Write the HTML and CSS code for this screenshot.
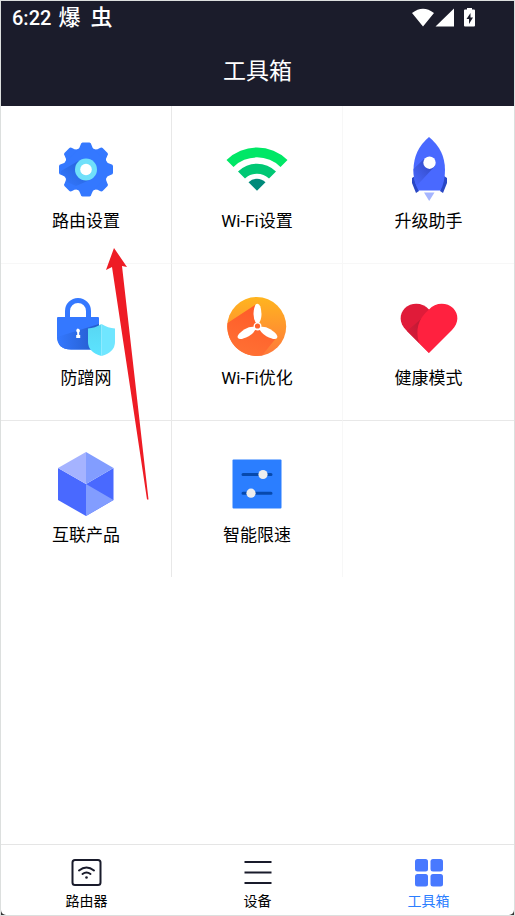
FILE: index.html
```html
<!DOCTYPE html>
<html lang="zh-CN">
<head>
<meta charset="utf-8">
<meta name="viewport" content="width=device-width, initial-scale=1">
<title>工具箱</title>
<link rel="stylesheet" href="styles.css">
</head>
<body>
<div class="screen">
  <header class="header">
    <div class="status">
      <span class="time">6:22</span>
      <span class="notices"><span>爆</span><span>虫</span></span>
      <svg class="signals" width="64" height="20" viewBox="0 0 64 20" aria-hidden="true">
        <path fill="#fff" d="M0 5Q11-3.500 22 5L11 18.500ZM23.500 18.500 42 .5V18.500ZM55 1.500V0h5v1.500h2q1 0 1 1V17.500q0 1-1 1h-9q-1 0-1-1V2.500q0-1 1-1Z"/>
        <path fill="#1b1c2b" d="M58.500 5 54.500 11h2.500v5l4-6.500h-2.500Z"/>
      </svg>
    </div>
    <h1 class="title">工具箱</h1>
  </header>

  <main class="content">
    <div class="grid">
      <a class="tool" href="#router">
        <svg class="tool-icon" viewBox="0 0 80 80" aria-hidden="true">
          <defs>
            <path id="tooth" d="M31 20Q34 18 34.500 15 35 12.500 36.500 12.500h7Q45 12.500 45.500 15 46 18 49 20Z"/>
            <linearGradient id="gearShade" x1="1" y1="0" x2="0" y2="1"><stop offset="0" stop-color="#245fd2"/><stop offset="1" stop-color="#3478ff"/></linearGradient>
          </defs>
          <g fill="#3478ff">
            <circle cx="40" cy="39.500" r="22"/>
            <use href="#tooth"/><use href="#tooth" transform="rotate(45 40 39.500)"/><use href="#tooth" transform="rotate(90 40 39.500)"/><use href="#tooth" transform="rotate(135 40 39.500)"/><use href="#tooth" transform="rotate(180 40 39.500)"/><use href="#tooth" transform="rotate(225 40 39.500)"/><use href="#tooth" transform="rotate(270 40 39.500)"/><use href="#tooth" transform="rotate(315 40 39.500)"/>
          </g>
          <path fill="url(#gearShade)" d="M34 30 15 41v3l5 3q1 4 1 5l9 4L46 49Z"/>
          <circle cx="40" cy="39.500" r="11" fill="#70e0fa"/><circle cx="40" cy="39.500" r="5.800" fill="#fff"/>
        </svg>
        <span>路由设置</span>
      </a>
      <a class="tool" href="#wifi">
        <svg class="tool-icon" viewBox="0 0 80 80" aria-hidden="true">
          <path fill="#00e766" d="M9.500 30A43.500 43.500 0 0 1 70.500 30L63.500 37A33.500 33.500 0 0 0 16.500 37Z"/>
          <path fill="#00c874" d="M21 41.500A27 27 0 0 1 59 41.500L52 48.500A17.500 17.500 0 0 0 28 48.500Z"/>
          <path fill="#008a7a" d="M31.500 52.200A12 12 0 0 1 48.500 52.200L40 60.800Z"/>
        </svg>
        <span>Wi-Fi设置</span>
      </a>
      <a class="tool" href="#upgrade">
        <svg class="tool-icon" viewBox="0 0 80 80" aria-hidden="true">
          <defs><linearGradient id="rocketShade" x1="1" y1="0" x2="0" y2="1"><stop offset="0" stop-color="#2f45bd"/><stop offset="1" stop-color="#4969ff"/></linearGradient></defs>
          <path fill="#2947c4" d="M26 46 23 48v5l4 10 3-2ZM55 46l3 2v5l-4 10-3-2Z"/>
          <path fill="#4969ff" d="M40 7Q24.500 20 24.500 40q0 12 5 20.500h22Q56 52 56 40 56 20 40 7Z"/>
          <path fill="url(#rocketShade)" d="M35 29 24.500 39q0 11 3 17L46 36Z"/>
          <circle cx="40.500" cy="32.700" r="6.200" fill="#fff"/>
          <path fill="#a5b5ff" d="M35 62.500h10.500L40.200 71Z"/>
        </svg>
        <span>升级助手</span>
      </a>

      <a class="tool" href="#guard">
        <svg class="tool-icon" viewBox="0 0 80 80" aria-hidden="true">
          <defs><linearGradient id="lockShade"><stop offset="0" stop-color="#3478ff"/><stop offset="1" stop-color="#245bc9"/></linearGradient><linearGradient id="shieldLight" x1="0" y1="0" x2="0" y2="1"><stop offset="0" stop-color="#58d6f2"/><stop offset="1" stop-color="#5ce4ff"/></linearGradient></defs>
          <path fill="none" stroke="#3478ff" stroke-width="5" d="M21.500 32V24a10.500 10.500 0 0 1 21 0v8"/>
          <path fill="#3478ff" d="M12 30h40q1 0 1 1v31.500H25Q11 62.500 11 49V31q0-1 1-1Z"/>
          <path fill="url(#lockShade)" d="M11 50 53 37v25.500H25Q12 62.500 11 50Z"/>
          <path fill="#fff" d="M31.700 41.500a2.300 2.300 0 0 1 1.500 4v2.500h1v3h-4v-3h1v-2.500a2.300 2.300 0 0 1 .5-4Z"/>
          <path fill="url(#shieldLight)" d="M55.500 37Q49 41 42 41.500V55q0 10 13.500 14Z"/>
          <path fill="#70e6ff" d="M55.500 37Q62 41 69 41.500V55q0 10-13.500 14Z"/>
        </svg>
        <span>防蹭网</span>
      </a>
      <a class="tool" href="#optimize">
        <svg class="tool-icon" viewBox="0 0 80 80" aria-hidden="true">
          <defs>
            <linearGradient id="fanBg" x1="0" y1="0" x2="0" y2="1"><stop offset="0" stop-color="#ffb51f"/><stop offset="1" stop-color="#ff783b"/></linearGradient>
            <linearGradient id="fanShade" x1=".6" y1="0" x2=".3" y2="1"><stop offset="0" stop-color="#ff5a28"/><stop offset="1" stop-color="#ff7134"/></linearGradient>
            <path id="blade" d="M40.500 38Q36.500 34 36.500 27 37 16.800 40.500 16.800T44.500 27Q44.500 34 40.500 38Z"/>
          </defs>
          <circle cx="39.700" cy="39.500" r="29.500" fill="url(#fanBg)"/>
          <path fill="url(#fanShade)" d="M38 18 10.500 36A29.500 29.500 0 0 0 45 68.500L60 50 42 38Z"/>
          <g fill="#fff"><use href="#blade"/><use href="#blade" transform="rotate(120 40.500 39.500)"/><use href="#blade" transform="rotate(240 40.500 39.500)"/><circle cx="40.500" cy="39.500" r="4"/></g>
          <circle cx="40.500" cy="39" r="2.600" fill="#ff632c"/>
        </svg>
        <span>Wi-Fi优化</span>
      </a>
      <a class="tool" href="#health">
        <svg class="tool-icon" viewBox="0 0 80 80" aria-hidden="true">
          <defs><linearGradient id="heartShade" x1="1" y1="0" x2="0" y2="1"><stop offset="0" stop-color="#bd1a34"/><stop offset="1" stop-color="#df1b3a"/></linearGradient></defs>
          <path fill="#e01b39" d="M40 22.500C34 15 22 15 16 21S10 36 17 43L40 66Z"/>
          <path fill="url(#heartShade)" d="M32 32 18 44 30 56Z"/>
          <path fill="#ff213f" d="M40 22.500C46 15 58 15 64 21s6 15-1 22L40 66 30 56Q24 36 40 22.500Z"/>
        </svg>
        <span>健康模式</span>
      </a>

      <a class="tool" href="#products">
        <svg class="tool-icon" viewBox="0 0 80 80" aria-hidden="true">
          <path fill="#4969ff" d="M12 24 40 40 67.500 24V56L40 72 12 56Z"/>
          <path fill="#a5b3ff" d="M40 8V40L12 24Z"/>
          <path fill="#829dff" d="M40 8 67.500 24 40 40ZM40 40 67.500 56 40 72Z"/>
        </svg>
        <span>互联产品</span>
      </a>
      <a class="tool" href="#limit">
        <svg class="tool-icon" viewBox="0 0 80 80" aria-hidden="true">
          <rect x="15.500" y="15.500" width="49" height="49" rx="1" fill="#2b7eff"/>
          <path fill="none" stroke="#0749ad" stroke-width="3" stroke-linecap="round" d="M26 30.500h28M26 49.200h28"/>
          <circle cx="46" cy="30.500" r="4.600" fill="#eee"/><circle cx="34" cy="49.200" r="4.600" fill="#eee"/>
        </svg>
        <span>智能限速</span>
      </a>
      <div class="tool"></div>
    </div>
    <svg class="arrow" width="44" height="254" viewBox="0 0 44 254" aria-hidden="true">
      <path fill="#ee1c25" d="M9 1 1 23 7 20 42 252.500h1.500L17 19 22 20Z"/>
    </svg>
  </main>

  <nav class="tabs">
    <a class="tab" href="#home">
      <svg class="tab-icon" viewBox="0 0 32 32" fill="none" stroke="#191b2b" stroke-width="2" aria-hidden="true">
        <rect x="1.500" y="3" width="28" height="25" rx="2.500"/>
        <path stroke-linecap="round" d="M8 13.500Q15.500 7.500 23 13.500M11.500 17Q15.500 14 19.500 17"/><circle cx="15.500" cy="20.500" r="1.300" fill="#191b2b" stroke="none"/>
      </svg>
      <span>路由器</span>
    </a>
    <a class="tab" href="#devices">
      <svg class="tab-icon" viewBox="0 0 32 32" fill="none" stroke="#191b2b" stroke-width="2" aria-hidden="true"><path d="M2.500 5h27M2.500 15.500h27M2.500 26h27"/></svg>
      <span>设备</span>
    </a>
    <a class="tab tab-active" href="#tools" aria-current="page">
      <svg class="tab-icon" viewBox="0 0 32 32" fill="#4879ff" aria-hidden="true"><rect x="2" y="2" width="13" height="12.500" rx="2.500"/><rect x="17.500" y="2" width="12.500" height="12.500" rx="2.500"/><rect x="2" y="17" width="13" height="12.500" rx="2.500"/><rect x="17.500" y="17" width="12.500" height="12.500" rx="2.500"/></svg>
      <span>工具箱</span>
    </a>
  </nav>
</div>
</body>
</html>
```
FILE: styles.css
```css
* {
  box-sizing: border-box;
}

body {
  margin: 0;
  font-family: Roboto, "Noto Sans CJK SC", sans-serif;
  color: #000;
}

a {
  color: inherit;
  text-decoration: none;
}

.screen {
  display: flex;
  flex-direction: column;
  min-height: 100vh;
  border: 1px solid #dcdfde;
  background: #333;
}

.header {
  padding-bottom: 16px;
  background: #1b1c2b;
  color: #fff;
}

.status {
  display: flex;
  align-items: center;
  height: 34px;
  padding: 0 38px 0 11px;
}

.time {
  font-size: 20px;
  font-weight: 500;
  line-height: 34px;
}

.notices {
  display: flex;
  gap: 10px;
  margin-left: 7px;
  font-size: 22px;
  font-weight: 500;
  line-height: 34px;
}

.signals {
  margin-left: auto;
}

.title {
  margin: 0;
  padding-top: 19px;
  font-size: 23px;
  font-weight: 400;
  line-height: 36px;
  text-align: center;
}

.content {
  position: relative;
  flex: 1;
  background: #fff;
}

.grid {
  display: grid;
  grid-template-columns: repeat(3, 1fr);
}

.tool {
  display: flex;
  flex-direction: column;
  align-items: center;
  padding: 24px 0 31px;
  border-right: 1px solid #e8e8e8;
  font-size: 17px;
  line-height: 22px;
}

.tool:nth-child(n+4) {
  padding-top: 23px;
  border-top: 1px solid #f7f7f7;
}

.tool:nth-child(n+7) {
  border-top-color: #e8e8e8;
}

.tool:nth-child(3n+2) {
  border-right-color: #f7f7f7;
}

.tool:nth-child(3n) {
  border-right: 0;
}

.tool-icon {
  width: 80px;
  height: 80px;
}

.arrow {
  position: absolute;
  top: 141px;
  left: 104px;
  pointer-events: none;
}

.tabs {
  display: grid;
  grid-template-columns: repeat(3, 1fr);
  border-top: 1px solid #e5e5e5;
  border-radius: 0 0 5px 5px;
  background: #fff;
}

.tab {
  display: flex;
  flex-direction: column;
  align-items: center;
  gap: 1px;
  padding: 12px 0 3px;
  font-size: 14px;
  line-height: 22px;
}

.tab-icon {
  width: 32px;
  height: 32px;
}

.tab-active {
  color: #2b7eff;
}
```
